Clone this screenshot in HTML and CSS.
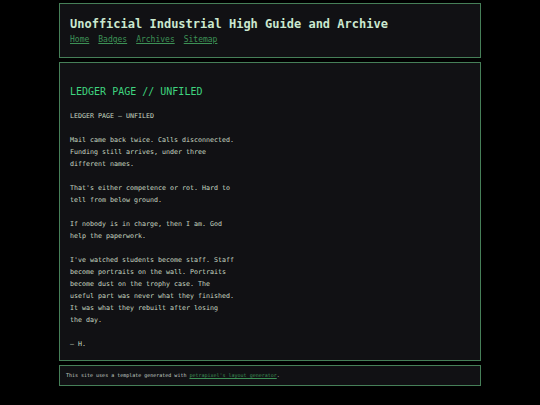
FILE: index.html
```html
<!DOCTYPE html>
<html lang="en">
<head>
  <meta charset="UTF-8" />
  <meta name="viewport" content="width=device-width, initial-scale=1.0" />
  <title>Ledger Page // Unfiled</title>
  <link rel="stylesheet" href="styles.css">
</head>
<body>
  <div class="layout">
    <header class="box header">
      <h1 class="site-title">Unofficial Industrial High Guide and Archive</h1>
      <nav class="nav">
        <a href="#">Home</a>
        <a href="#">Badges</a>
        <a href="#">Archives</a>
        <a href="#">Sitemap</a>
      </nav>
    </header>

    <main class="box main">
      <h2 class="page-title">LEDGER PAGE // UNFILED</h2>
      <p>LEDGER PAGE — UNFILED</p>
      <p>Mail came back twice. Calls disconnected.<br>Funding still arrives, under three<br>different names.</p>
      <p>That's either competence or rot. Hard to<br>tell from below ground.</p>
      <p>If nobody is in charge, then I am. God<br>help the paperwork.</p>
      <p>I've watched students become staff. Staff<br>become portraits on the wall. Portraits<br>become dust on the trophy case. The<br>useful part was never what they finished.<br>It was what they rebuilt after losing<br>the day.</p>
      <p>— H.</p>
    </main>

    <footer class="box footer">
      This site uses a template generated with <a href="#">petrapixel's layout generator</a>.
    </footer>
  </div>
</body>
</html>
```

FILE: styles.css
```css
body {
  margin: 0;
  background: #000000;
  font-family: "DejaVu Sans Mono", monospace;
  color: #c8d8c2;
}

.layout {
  width: 422px;
  margin: 0 auto;
  padding-top: 3px;
  display: flex;
  flex-direction: column;
  gap: 4px;
}

.box {
  background: #111114;
  border: 1px solid #467f58;
}

.header {
  padding: 13px 10px 11px;
}

.site-title {
  margin: 0;
  font-size: 12px;
  line-height: 14px;
  font-weight: bold;
  color: #cbe8cf;
}

.nav {
  display: flex;
  gap: 9px;
  margin-top: 3px;
  font-size: 8px;
  line-height: 12px;
}

.nav a {
  color: #3d9156;
}

.main {
  padding: 23px 10px 10px;
}

.page-title {
  margin: 0 0 12px;
  font-size: 10px;
  line-height: 12px;
  font-weight: normal;
  color: #3fd47f;
}

.main p {
  margin: 0 0 12px;
  font-size: 6.65px;
  line-height: 12px;
}

.main p:last-child {
  margin-bottom: 0;
}

.footer {
  padding: 6px;
  font-size: 5px;
  line-height: 7px;
  color: #c4cfc6;
}

.footer a {
  color: #3d9156;
}
```
